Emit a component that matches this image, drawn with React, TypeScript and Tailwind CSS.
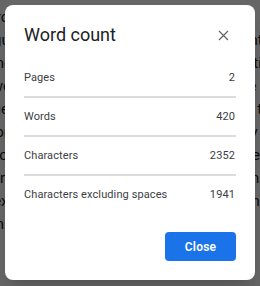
const rows = [
  { label: "Pages", value: "2" },
  { label: "Words", value: "420" },
  { label: "Characters", value: "2352" },
  { label: "Characters excluding spaces", value: "1941" },
];

const docText =
  "Our product documentation covers the configuration of each service, the deployment pipeline and the monitoring setup. Every section is reviewed by the team before release, and the changes are tracked in the shared history so that everyone can follow what happened and why it was done this way. The notes below describe the work in progress for this quarter and the plans for the next one, with owners and dates where they are known.";

export default function App() {
  return (
    <div className="relative h-[286px] w-[260px] overflow-hidden bg-white font-['Roboto','Liberation_Sans',sans-serif]">
      {/* document behind the modal */}
      <p aria-hidden className="-ml-[40px] w-[340px] pt-[6px] text-[15px] leading-[23px] text-[#222]">
        {docText}
      </p>
      <div className="absolute inset-0 bg-black/60" />

      <div className="absolute left-[5px] top-[5px] flex h-[275px] w-[250px] flex-col rounded-lg bg-white px-[19px] shadow-xl">
        <div className="mt-[18px] flex h-[24px] items-center justify-between">
          <h1 className="text-[18px] leading-[24px] text-[#202124]">Word count</h1>
          <button className="mr-[7px] text-[#5f6368]" aria-label="Close">
            <svg width="11" height="11" viewBox="0 0 11 11">
              <path d="M1 1L10 10M10 1L1 10" stroke="currentColor" strokeWidth="1.2" />
            </svg>
          </button>
        </div>

        <div className="mt-[12px]">
          {rows.map((r, i) => (
            <div
              key={r.label}
              className={`flex items-center justify-between pt-[2px] text-[11px] tracking-[0.1px] text-[#3c4043] ${
                i < rows.length - 1 ? "h-[39px] border-b-2 border-[#dadce0]" : "h-[37px]"
              }`}
            >
              <span>{r.label}</span>
              <span className="pr-px">{r.value}</span>
            </div>
          ))}
        </div>

        <div className="mt-[19px] flex justify-end">
          <button className="h-[29px] w-[71px] rounded bg-[#1a73e8] text-[12px] font-semibold tracking-[0.2px] text-white">
            Close
          </button>
        </div>
      </div>
    </div>
  );
}
